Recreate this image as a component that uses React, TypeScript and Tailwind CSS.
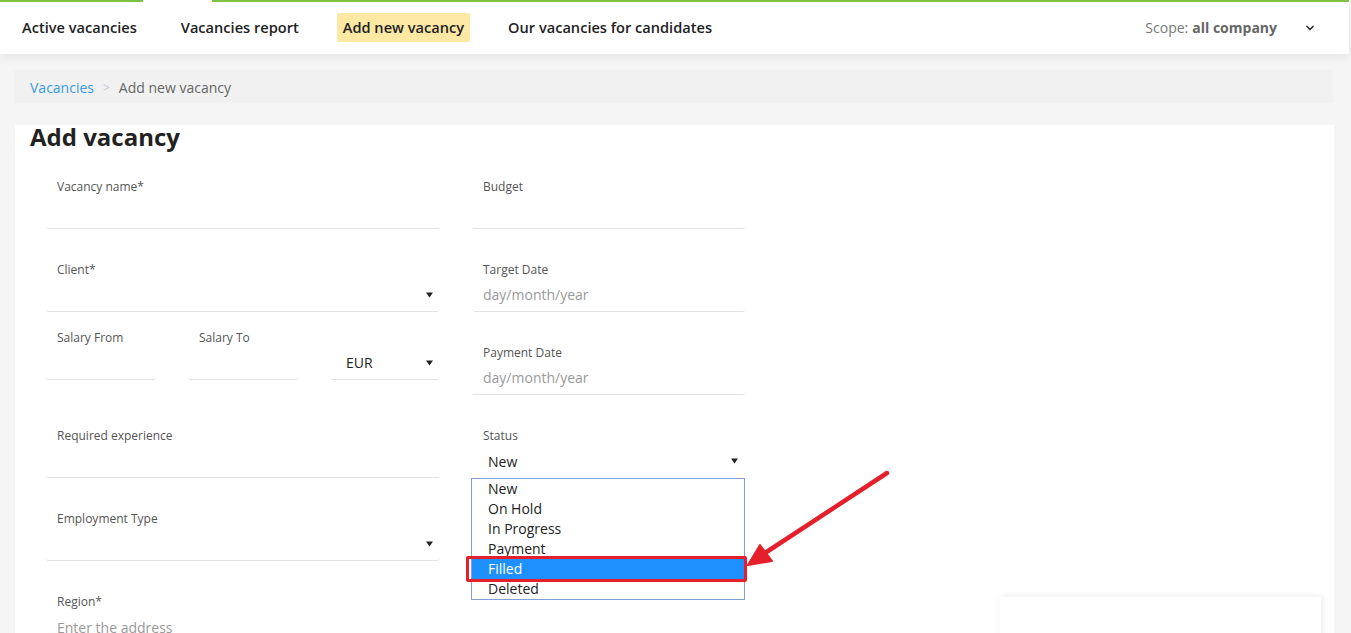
import { ChevronDown } from 'lucide-react';

const navItems = ['Active vacancies', 'Vacancies report', 'Add new vacancy', 'Our vacancies for candidates'];
const statuses = ['New', 'On Hold', 'In Progress', 'Payment', 'Filled', 'Deleted'];

function Caret() {
  return (
    <svg width="7" height="6" viewBox="0 0 7 6" className="shrink-0">
      <path d="M0 0.5 L7 0.5 L3.5 5.5 Z" fill="#222" />
    </svg>
  );
}

type FieldProps = {
  label: string;
  value?: string;
  placeholder?: string;
  select?: boolean;
  pt?: string;
  noBorder?: boolean;
  children?: React.ReactNode;
};

function Field({ label, value, placeholder, select, pt = 'pt-[33px]', noBorder, children }: FieldProps) {
  return (
    <div className={`relative ${pt}`}>
      <div className="h-[16px] pl-[11px] text-[12px] leading-[16px] text-[#555]">{label}</div>
      <div
        className={`flex h-[34px] items-center justify-between pr-[7px] ${select ? 'pl-[16px]' : 'pl-[11px]'} ${
          noBorder ? '' : 'border-b border-[#e3e3e3] rounded-b-[3px]'
        }`}
      >
        <span className={`text-[14px] ${value ? 'text-[#222]' : 'text-[#9a9a9a]'}`}>{value ?? placeholder ?? ''}</span>
        {select && <Caret />}
      </div>
      {children}
    </div>
  );
}

export default function App() {
  return (
    <div className="relative h-[633px] overflow-hidden bg-[#f5f5f5]" style={{ fontFamily: '"Open Sans", "Noto Sans", sans-serif' }}>
      {/* top bar */}
      <header className="relative z-10 w-[1349px] bg-white shadow-[0_3px_10px_rgba(0,0,0,0.07)]">
        <div className="flex h-[2px]">
          <div className="w-[143px] bg-[#7cc243]" />
          <div className="w-[69px] bg-white" />
          <div className="flex-1 bg-[#7cc243]" />
        </div>
        <div className="flex h-[52px] items-center pb-[1px] pl-[16px] pr-[33px]">
          <nav className="flex items-center gap-[32px]">
            {navItems.map((item) => (
              <div
                key={item}
                className={`flex h-[29px] items-center rounded-[2px] px-[6px] text-[14.6px] font-semibold text-[#222] ${
                  item === 'Add new vacancy' ? 'bg-[#fde8a4]' : ''
                }`}
              >
                {item}
              </div>
            ))}
          </nav>
          <div className="ml-auto flex items-center text-[14px] text-[#777]">
            <span>Scope:</span>
            <span className="ml-[4px] font-bold text-[#666]">all company</span>
            <ChevronDown size={12} strokeWidth={3.5} className="ml-[27px] text-[#333]" />
          </div>
        </div>
      </header>

      {/* breadcrumbs */}
      <div className="ml-[14px] mt-[16px] flex h-[33px] w-[1319px] items-center bg-[#f1f1f1] pl-[16px] pt-[2px] text-[14px]">
        <span className="text-[#3a9ae6]">Vacancies</span>
        <span className="mx-[9px] text-[12px] text-[#c8c0d8]">&gt;</span>
        <span className="text-[#666]">Add new vacancy</span>
      </div>

      {/* card */}
      <main className="ml-[15px] mt-[22px] h-[520px] w-[1319px] bg-white">
        <h1 className="pl-[15px] pt-[3px] text-[24px] font-bold leading-[18px] text-[#222]">Add vacancy</h1>
        <div className="flex gap-[32px] pl-[31px]">
          <div className="flex w-[394px] flex-col">
            <Field label="Vacancy name*" />
            <Field label="Client*" select />
            <div className="flex gap-[32px] pt-[18px]">
              <div className="w-[110px]">
                <Field label="Salary From" pt="pt-0" />
              </div>
              <div className="w-[110px]">
                <Field label="Salary To" pt="pt-0" />
              </div>
              <div className="w-[110px]">
                <Field label="" value="EUR" select pt="pt-0" />
              </div>
            </div>
            <Field label="Required experience" pt="pt-[48px]" />
            <Field label="Employment Type" select />
            <div className="pt-[33px]">
              <div className="pl-[11px] text-[12px] leading-[16px] text-[#555]">Region*</div>
              <div className="flex h-[34px] items-center pl-[11px] text-[14px] text-[#9a9a9a]">Enter the address</div>
            </div>
          </div>

          <div className="flex w-[273px] flex-col">
            <Field label="Budget" />
            <Field label="Target Date" placeholder="day/month/year" />
            <Field label="Payment Date" placeholder="day/month/year" />
            <Field label="Status" value="New" select noBorder>
              <ul className="absolute left-[-1px] top-full z-10 w-[274px] border border-[#7ea0d6] bg-white">
                {statuses.map((s) => (
                  <li
                    key={s}
                    className={`pl-[16px] text-[14px] leading-[20px] ${s === 'Filled' ? 'bg-[#1e90ff] text-white' : 'text-[#222]'}`}
                  >
                    {s}
                  </li>
                ))}
              </ul>
            </Field>
          </div>
        </div>
      </main>

      {/* floating panel bottom right */}
      <div className="absolute left-[1000px] top-[597px] h-[60px] w-[321px] bg-white shadow-[0_-3px_8px_rgba(0,0,0,0.035),3px_0_6px_rgba(0,0,0,0.04)]" />

      {/* annotation */}
      <div className="pointer-events-none absolute left-[466px] top-[556px] z-20 h-[26px] w-[281px] rounded-[2px] border-[3px] border-[#e3202b]" />
      <svg className="pointer-events-none absolute left-0 top-0 z-20" width="1351" height="633">
        <line x1="887" y1="473" x2="765" y2="553" stroke="#e3202b" strokeWidth="4.5" strokeLinecap="round" />
        <path d="M748 565 L760 545 L772 561 Z" fill="#e3202b" stroke="#e3202b" strokeWidth="2" strokeLinejoin="round" />
      </svg>
    </div>
  );
}
